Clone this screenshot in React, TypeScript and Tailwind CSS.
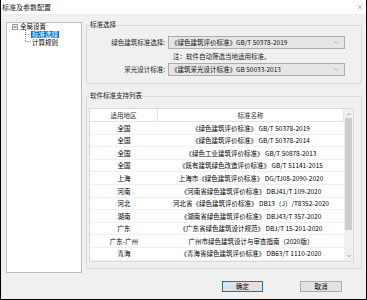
import { ChevronDown, ChevronUp, X } from "lucide-react"

const rows: [string, string][] = [
  ["全国", "《绿色建筑评价标准》 GB/T 50378-2019"],
  ["全国", "《绿色建筑评价标准》 GB/T 50378-2014"],
  ["全国", "《绿色工业建筑评价标准》 GB/T 50878-2013"],
  ["全国", "《既有建筑绿色改造评价标准》 GB/T 51141-2015"],
  ["上海", "上海市《绿色建筑评价标准》 DG/TJ08-2090-2020"],
  ["河南", "《河南省绿色建筑评价标准》 DBJ41/T 109-2020"],
  ["河北", "河北省《绿色建筑评价标准》 DB13（J）/T8352-2020"],
  ["湖南", "《湖南省绿色建筑评价标准》 DBJ43/T 357-2020"],
  ["广东", "《广东省绿色建筑设计规范》 DBJ/T 15-201-2020"],
  ["广东-广州", "广州市绿色建筑设计与审查指南（2020版）"],
  ["青海", "《青海省绿色建筑评价标准》 DB63/T 1110-2020"],
]

function Select({ value }: { value: string }) {
  return (
    <div className="w-[177px] h-[13px] flex items-center justify-between bg-[#e5e5e5] border border-[#adadad] pl-[2px] pr-[4px] text-[#111]">
      <span className="whitespace-nowrap">{value}</span>
      <ChevronDown className="w-[7px] h-[7px] text-[#777]" strokeWidth={1.5} />
    </div>
  )
}

export default function App() {
  return (
    <div className="w-[367px] h-[300px] flex flex-col bg-[#f0f0f0] border-x border-b border-black text-[6.5px] leading-none text-black font-['Noto_Sans_CJK_SC','Liberation_Sans',sans-serif]">
      {/* title bar */}
      <div className="h-[14px] shrink-0 bg-white flex items-center justify-between pl-[1px] pr-[2px]">
        <span className="text-[7px] text-[#222]">标准及参数配置</span>
        <X className="w-[8px] h-[8px] text-[#555]" strokeWidth={1.2} />
      </div>

      <div className="flex pt-[7px] pl-[5px]">
        {/* tree */}
        <div className="mt-[1px] w-[76px] h-[251px] bg-white border border-[#bcbcbc]">
          <div className="flex items-center h-[7px] pl-[5px]">
            <svg width="6" height="6" viewBox="0 0 6 6" className="shrink-0">
              <rect x="0.5" y="0.5" width="5" height="5" fill="white" stroke="#999" />
              <line x1="1.5" y1="3" x2="4.5" y2="3" stroke="#444" />
            </svg>
            <span className="ml-[2px] leading-[7px]">全局设置</span>
          </div>
          <div className="flex pl-[18px]">
            <svg width="6" height="13" viewBox="0 0 6 13" className="shrink-0">
              <line x1="0.5" y1="0" x2="0.5" y2="12" stroke="#888" strokeDasharray="1 1" />
              <line x1="0.5" y1="4.5" x2="6" y2="4.5" stroke="#888" strokeDasharray="1 1" />
              <line x1="0.5" y1="11.5" x2="6" y2="11.5" stroke="#888" strokeDasharray="1 1" />
            </svg>
            <div className="flex flex-col">
              <span className="bg-[#0078d7] text-white px-[1px] leading-[7px] mt-[1px]">标准选择</span>
              <span className="pl-[1px] mt-[1px] leading-[7px]">计算规则</span>
            </div>
          </div>
        </div>

        <div className="ml-[4px] w-[276px]">
          <fieldset className="h-[63px] border border-[#dcdcdc]">
            <legend className="ml-[2px] px-[1px] h-[8px] text-[#222]">标准选择</legend>
            <div className="pt-[7px] flex flex-col">
              <div className="flex items-center">
                <span className="w-[78px] text-right text-[#222]">绿色建筑标准选择:</span>
                <div className="ml-[3px]">
                  <Select value="《绿色建筑评价标准》GB/T 50378-2019" />
                </div>
              </div>
              <div className="h-[14px] flex items-center pl-[86px] text-[#222]">注：软件自动筛选当地适用标准。</div>
              <div className="flex items-center">
                <span className="w-[78px] text-right text-[#222]">采光设计标准:</span>
                <div className="ml-[3px]">
                  <Select value="《建筑采光设计标准》GB 50033-2013" />
                </div>
              </div>
            </div>
          </fieldset>

          <fieldset className="mt-[8px] h-[177px] border border-[#dcdcdc]">
            <legend className="ml-[2px] px-[1px] h-[8px] text-[#222]">软件标准支持列表</legend>
            <div className="pt-[8px] pl-[2px]">
              <div className="w-[265px] h-[154px] flex bg-white border border-[#d9d9d9]">
                <div className="flex-1 flex flex-col">
                  <div className="h-[13px] flex items-center border-b border-[#e5e5e5] text-[#333]">
                    <div className="w-[68px] h-full flex items-center justify-center border-r border-[#e5e5e5]">适用地区</div>
                    <div className="flex-1 h-full flex items-center justify-center border-r border-[#e5e5e5]">标准名称</div>
                  </div>
                  {rows.map(([area, name], i) => (
                    <div key={i} className="h-[12.6px] flex items-center border-b border-[#f0f0f0]">
                      <div className="w-[68px] text-center">{area}</div>
                      <div className="flex-1 text-center whitespace-nowrap">{name}</div>
                    </div>
                  ))}
                </div>
                <div className="w-[9px] flex flex-col bg-[#f0f0f0]">
                  <div className="h-[9px] flex items-center justify-center">
                    <ChevronUp className="w-[6px] h-[6px] text-[#606060]" strokeWidth={2} />
                  </div>
                  <div className="mx-[1px] h-[112px] bg-[#cdcdcd]" />
                  <div className="flex-1" />
                  <div className="h-[10px] flex items-center justify-center">
                    <ChevronDown className="w-[6px] h-[6px] text-[#606060]" strokeWidth={2} />
                  </div>
                </div>
              </div>
            </div>
          </fieldset>
        </div>
      </div>

      <div className="flex justify-end mt-[8px] pr-[24px] gap-[37px]">
        <button className="w-[41px] h-[11px] flex items-center justify-center bg-[#e1e1e1] border border-[#0078d7] text-[6.5px]">确定</button>
        <button className="w-[42px] h-[11px] flex items-center justify-center bg-[#e1e1e1] border border-[#adadad] text-[6.5px]">取消</button>
      </div>
    </div>
  )
}
